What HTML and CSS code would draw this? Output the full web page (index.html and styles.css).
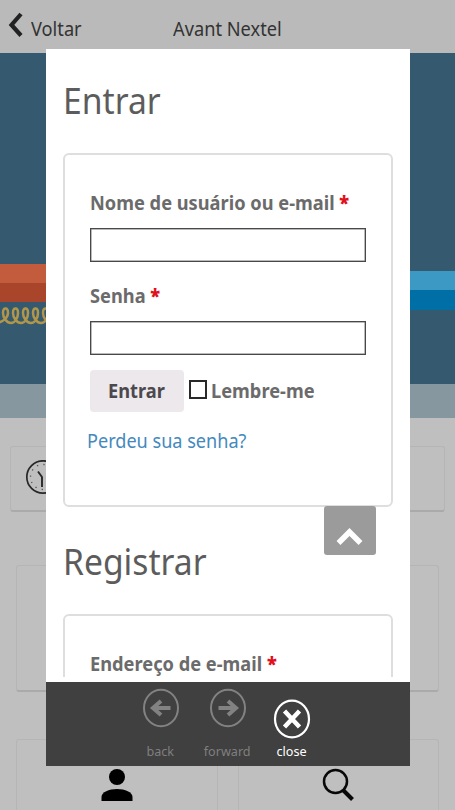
FILE: index.html
```html
<!DOCTYPE html>
<html lang="pt-BR">
<head>
<meta charset="utf-8">
<title>Avant Nextel</title>
<link rel="stylesheet" href="styles.css">
</head>
<body>
<div class="app">
  <header class="topbar">
    <svg class="chevron" width="15" height="26" viewBox="0 0 15 26"><path d="M13 2 3.500 13 13 23.500" fill="none" stroke="#222" stroke-width="4.200"/></svg>
    <span class="back-label">Voltar</span>
    <span class="title">Avant Nextel</span>
  </header>
  <div class="hero">
    <div class="hero-left">
      <div class="band orange"></div>
      <svg class="coil" width="50" height="22" viewBox="0 0 50 22"><path d="M-5 17C2 17 8 12 8 7C8 1 3 1 3 7C3 12 7 17 11 17C15 17 18 12 18 7C18 1 13 1 13 7C13 12 17 17 21 17C25 17 28 12 28 7C28 1 23 1 23 7C23 12 27 17 31 17C35 17 38 12 38 7C38 1 33 1 33 7C33 12 37 17 41 17C45 17 48 12 48 7C48 1 43 1 43 7C43 12 47 17 51 17" fill="none" stroke="#b0964a" stroke-width="2.500"/></svg>
    </div>
    <div class="hero-right"><div class="band blue"></div></div>
  </div>
  <div class="strip"></div>
  <main class="tiles">
    <section class="tile wide">
      <svg width="36" height="36" viewBox="0 0 36 36"><circle cx="18" cy="17" r="16.200" fill="none" stroke="#282828" stroke-width="1.700"/><circle cx="18" cy="17" r="12.500" fill="none" stroke="#555" stroke-width="1.300" stroke-dasharray="1.300 5.245"/><path d="M13 11.500 17 17v10" fill="none" stroke="#282828" stroke-width="1.900"/></svg>
    </section>
    <section class="tile middle"></section>
    <div class="pair">
      <section class="tile"><svg width="32" height="34" viewBox="0 0 32 34"><circle cx="16" cy="9" r="8"/><path d="M.5 33v-4C.500 24 8 21 16 21s15.500 3 15.500 8v4z"/></svg></section>
      <section class="tile"><svg width="32" height="34" viewBox="0 0 32 34"><circle cx="13.500" cy="13.500" r="11.500" fill="none" stroke="#080808" stroke-width="2.500"/><path d="m21.500 22.500 9 9" stroke="#080808" stroke-width="4"/></svg></section>
    </div>
  </main>
</div>
<div class="modal">
  <div class="page">
    <h2><span>Entrar</span></h2>
    <form class="card login">
      <label for="user"><span>Nome de usuário ou e-mail <b>*</b></span></label>
      <input class="field" id="user" type="text">
      <label for="pass"><span>Senha <b>*</b></span></label>
      <input class="field" id="pass" type="password">
      <div class="actions">
        <button type="button"><span>Entrar</span></button>
        <input class="check" id="remember" type="checkbox">
        <label for="remember"><span>Lembre-me</span></label>
      </div>
      <a class="lost"><span>Perdeu sua senha?</span></a>
    </form>
    <h2 class="second"><span>Registrar</span></h2>
    <form class="card register">
      <label><span>Endereço de e-mail <b>*</b></span></label>
    </form>
    <div class="to-top"><svg width="27" height="20" viewBox="0 0 27 20"><path d="M2.500 17 13.500 6l11 11" fill="none" stroke="#fff" stroke-width="5.500"/></svg></div>
  </div>
  <nav class="toolbar">
    <div class="tool"><svg width="38" height="40" viewBox="0 0 38 40"><ellipse cx="19" cy="20" rx="17" ry="18.300"/><path class="arrow" d="M28.500 20H11M19 13l-8 7 8 7"/></svg><span>back</span></div>
    <div class="tool"><svg width="38" height="40" viewBox="0 0 38 40"><ellipse cx="19" cy="20" rx="17" ry="18.300"/><path class="arrow" d="M9.500 20H27M19 13l8 7-8 7"/></svg><span>forward</span></div>
    <div class="tool close"><svg width="38" height="40" viewBox="0 0 38 40"><ellipse cx="19" cy="20" rx="17" ry="18.300"/><path class="cross" d="m11.500 12 15 16m0-16-15 16"/></svg><span>close</span></div>
  </nav>
</div>
</body>
</html>
```

FILE: styles.css
```css
* { box-sizing: border-box; }
body { margin: 0; width: 455px; height: 810px; overflow: hidden; position: relative; font-family: "Noto Sans", "Open Sans", sans-serif; background: #bfbfbf; }
.app { display: flex; flex-direction: column; height: 810px; }
.topbar { height: 53px; flex: none; background: #bababa; display: flex; padding: 12px 0 0 8px; font-size: 19.5px; line-height: 34px; color: #333; }
.topbar span { transform: scaleX(.935); transform-origin: left; white-space: nowrap; }
.chevron { flex: none; margin-right: 8px; }
.back-label { width: 142px; }
.hero { height: 331px; flex: none; background: #35596f; display: flex; justify-content: space-between; }
.hero-left { width: 46px; padding-top: 211px; overflow: hidden; }
.hero-right { width: 45px; padding-top: 218px; }
.band { height: 38px; }
.orange { background: linear-gradient(#c25c3c 50%, #a9452a 50%); }
.blue { background: linear-gradient(#3b99c3 50%, #006fa5 50%); height: 39px; }
.coil { display: block; margin-top: 4px; }
.strip { height: 34px; flex: none; background: #87979f; }
.tiles { padding-top: 28px; }
.tile { border: 1px solid #b5b5b5; border-bottom: 2px solid #aaa; border-radius: 3px; }
.wide { height: 66px; margin: 0 10px; padding: 13px 14px; }
.middle { height: 127px; margin: 53px 16px 0; }
.pair { margin: 47px 16px 0; display: flex; gap: 20px; }
.pair .tile { flex: 1; height: 90px; padding-top: 28px; text-align: center; }
.modal { position: absolute; left: 46px; top: 49px; width: 364px; height: 717px; background: #fff; display: flex; flex-direction: column; }
.page { position: relative; height: 628px; margin-bottom: 5px; overflow: hidden; padding: 26px 17px 0; color: #6b6b6b; }
h2 { margin: 0; height: 78px; font-size: 36px; font-weight: 400; line-height: 51px; color: #5c5c5c; }
.page span { display: inline-block; transform: scaleX(.935); transform-origin: left; white-space: nowrap; }
.page h2 span { transform: scaleX(.935); }
.card { width: 330px; border: 2px solid #dedede; border-radius: 6px; padding: 34px 25px 0; font-size: 19.5px; font-weight: 700; }
.login { height: 354px; }
.card label { display: block; line-height: 28px; height: 28px; }
label b { color: #e0101c; }
.field { display: block; width: 276px; height: 34px; margin: 11px 0 20px; border: 1px solid #484848; padding: 0; background: #fff; box-shadow: inset 0 0 0 .5px #777; }
#pass { margin-bottom: 15px; }
.actions { display: flex; align-items: center; height: 42px; }
button { width: 94px; height: 42px; border: 0; border-radius: 4px; background: #ece8ec; padding: 0 0 2px 18px; text-align: left; font: inherit; color: #4c484d; }
.check { appearance: none; width: 18px; height: 19px; border: 2px solid #292929; margin: -4px 4px 0 5px; }
.lost { display: block; margin: 15px 0 0 -3px; line-height: 28px; font-weight: 400; color: #4489bd; }
.page .lost span { transform: scaleX(.928); }
.second { margin-top: 29px; }
.register { height: 120px; }
.to-top { position: absolute; left: 278px; top: 457px; width: 52px; height: 49px; background: #9b9b9b; border-radius: 3px; padding: 20px 0 0 12px; }
.to-top svg { display: block; }
.toolbar { flex: 1; background: #404040; display: flex; padding-left: 81px; }
.tool { width: 67px; display: flex; flex-direction: column; align-items: center; color: #7f7f7f; font-size: 13px; line-height: 20px; padding-top: 6px; }
.tool svg { fill: none; stroke: #828282; stroke-width: 2; flex: none; }
.tool .arrow { stroke-width: 4; }
.tool span { margin-top: 13px; transform: scaleX(.97); }
.close { width: 62px; color: #fff; padding-top: 17px; }
.close svg { stroke: #fff; stroke-width: 2.200; }
.close .cross { stroke-width: 4.500; }
.close span { margin-top: 2px; }
```
